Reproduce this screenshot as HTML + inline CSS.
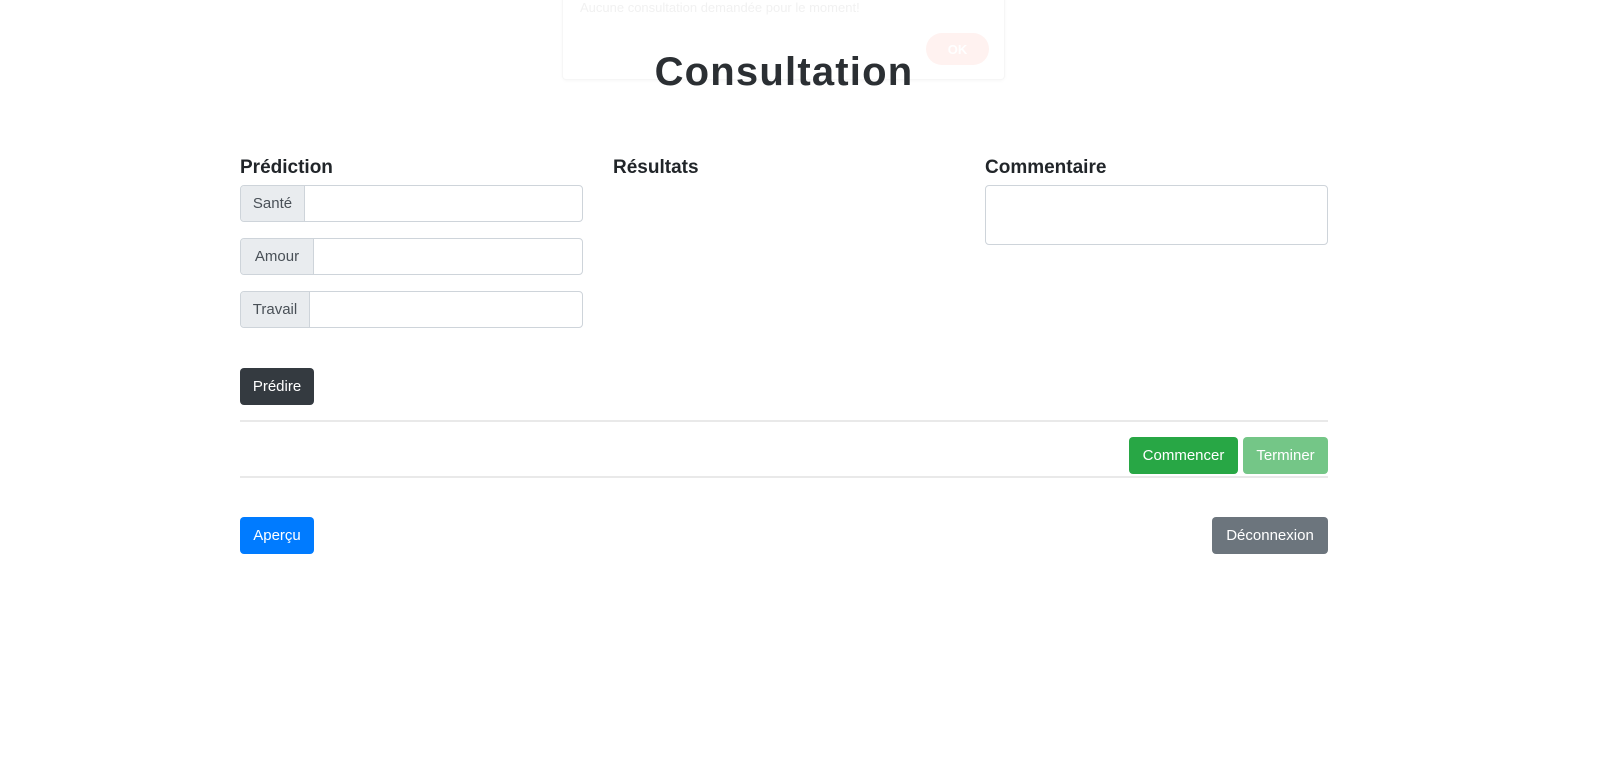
<!DOCTYPE html>
<html><head><meta charset="utf-8"><style>
body{margin:0;width:1600px;height:761px;background:#fff;font-family:"Liberation Sans",sans-serif;position:relative;overflow:hidden;color:#212529}
.a{position:absolute;box-sizing:border-box}
.btn{position:absolute;box-sizing:border-box;border-radius:4px;color:#fff;font-size:15px;display:flex;align-items:center;justify-content:center;height:37px}
.grp{position:absolute;left:240px;width:343px;height:37px;border:1px solid #ced4da;border-radius:4px;box-sizing:border-box;background:#fff}
.add{position:absolute;left:0;top:0;bottom:0;background:#e9ecef;border-right:1px solid #ced4da;color:#495057;font-size:15px;display:flex;align-items:center;justify-content:center;border-radius:3px 0 0 3px}
h5{position:absolute;margin:0;font-size:19px;font-weight:bold;top:157px}
</style></head><body>
<div class="a" style="left:562px;top:-10px;width:443px;height:90px;border:1px solid #f6f6f6;border-radius:4px;box-shadow:0 1px 3px rgba(0,0,0,0.03)"></div>
<div class="a" style="left:580px;top:0;font-size:13px;color:#f1f1f1">Aucune consultation demandée pour le moment!</div>
<div class="a" style="left:926px;top:33px;width:63px;height:32px;border-radius:16px;background:#fff2f0;color:#fff;font-size:13px;font-weight:bold;display:flex;align-items:center;justify-content:center">OK</div>
<div class="a" style="left:0;width:1568px;top:50px;text-align:center;font-size:40px;font-weight:bold;letter-spacing:1.2px;color:#2b2f33">Consultation</div>
<h5 style="left:240px">Prédiction</h5>
<h5 style="left:613px">Résultats</h5>
<h5 style="left:985px">Commentaire</h5>
<div class="grp" style="top:185px"><div class="add" style="width:63px">Santé</div></div>
<div class="grp" style="top:238px"><div class="add" style="width:72px">Amour</div></div>
<div class="grp" style="top:291px"><div class="add" style="width:68px">Travail</div></div>
<div class="a" style="left:985px;top:185px;width:343px;height:60px;border:1px solid #ced4da;border-radius:4px"></div>
<div class="btn" style="left:240px;top:368px;width:74px;background:#343a40">Prédire</div>
<div class="a" style="left:240px;top:420px;width:1088px;height:2px;background:#e9e9e9"></div>
<div class="btn" style="left:1129px;top:437px;width:109px;background:#28a745">Commencer</div>
<div class="btn" style="left:1243px;top:437px;width:85px;background:#74c687">Terminer</div>
<div class="a" style="left:240px;top:476px;width:1088px;height:2px;background:#e9e9e9"></div>
<div class="btn" style="left:240px;top:517px;width:74px;background:#007bff">Aperçu</div>
<div class="btn" style="left:1212px;top:517px;width:116px;background:#6c757d">Déconnexion</div>
</body></html>
